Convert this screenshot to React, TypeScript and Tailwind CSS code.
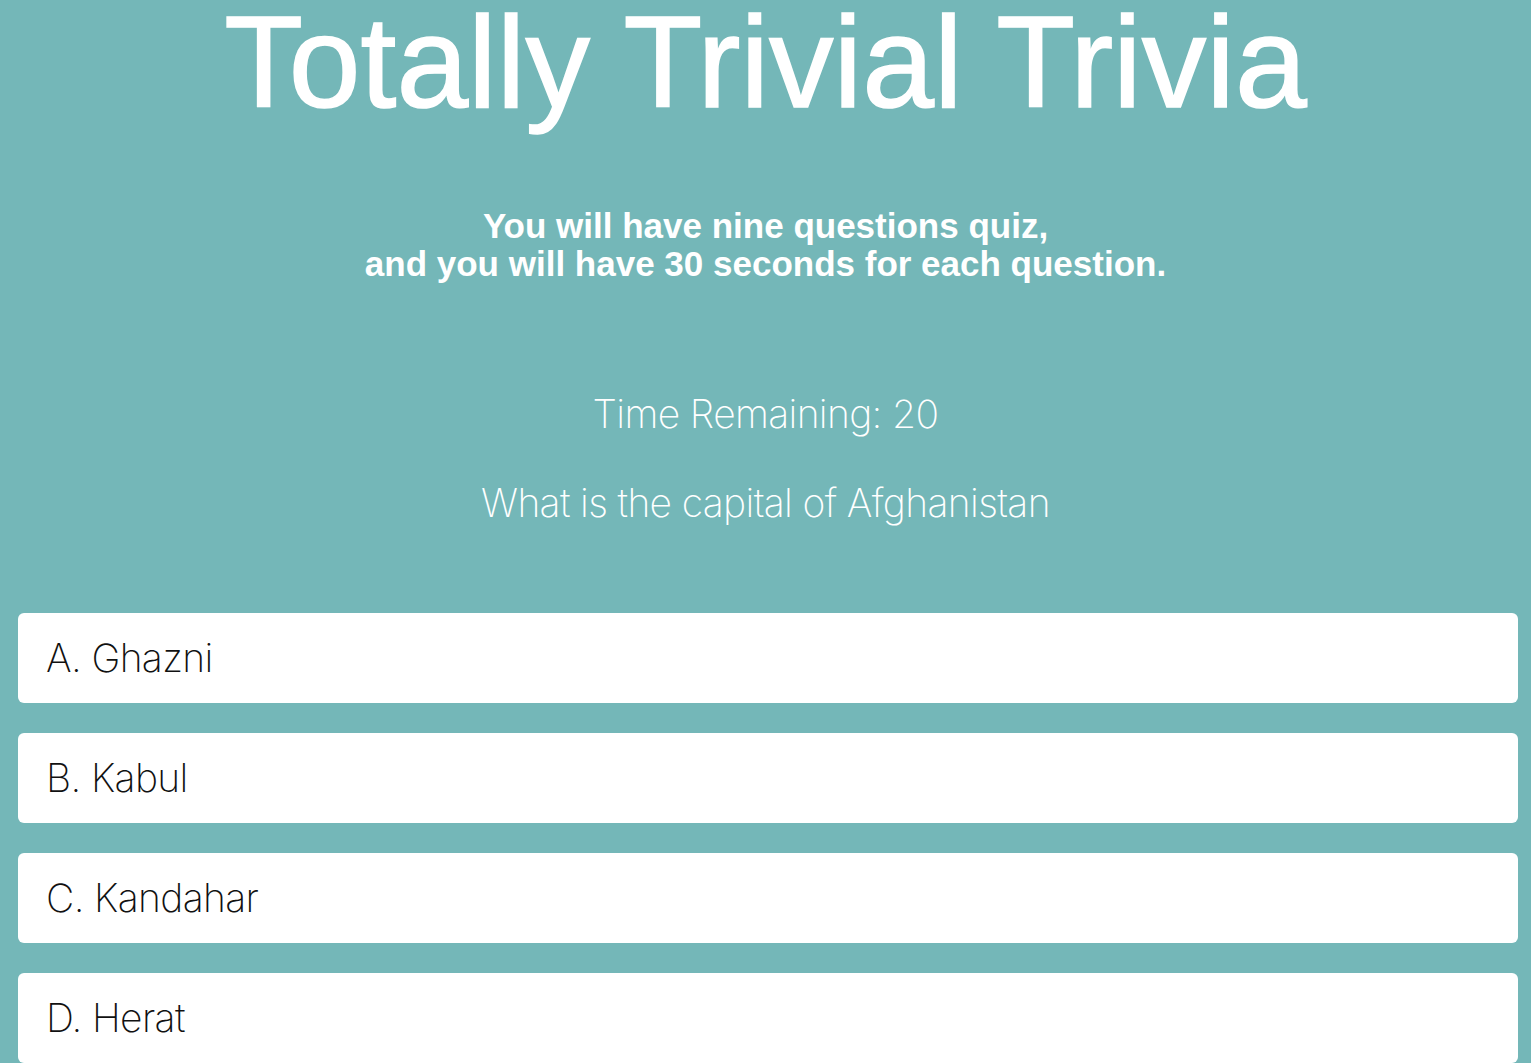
import React from 'react'

const answers = ['A. Ghazni', 'B. Kabul', 'C. Kandahar', 'D. Herat']

export default function App() {
  return (
    <div className="min-h-screen w-full bg-[#74b7b8] overflow-hidden">
      <h1 className="text-center text-white text-[129px] leading-[125px] [-webkit-text-stroke:1.5px_white] font-['Liberation_Sans',Arial,sans-serif]">
        Totally Trivial Trivia
      </h1>
      <p className="mt-[82px] text-center text-white font-bold text-[35px] leading-[38px] font-['Liberation_Sans',Arial,sans-serif]">
        You will have nine questions quiz,
        <br />
        and you will have 30 seconds for each question.
      </p>
      <div className="mt-[107px] text-center text-white font-extralight text-[39px] leading-[48px] tracking-[-0.65px] font-['Inter',sans-serif]">
        Time Remaining: 20
      </div>
      <div className="mt-[41px] text-center text-white font-extralight text-[39px] leading-[48px] tracking-[-0.65px] font-['Inter',sans-serif]">
        What is the capital of Afghanistan
      </div>
      <div className="mt-[86px] ml-[18px] w-[1500px] flex flex-col gap-[30px]">
        {answers.map((a) => (
          <div
            key={a}
            className="h-[90px] bg-white rounded-md flex items-center pl-[28px]"
          >
            <span className="text-[#111] font-extralight text-[39px] leading-[48px] tracking-[-0.65px] font-['Inter',sans-serif]">
              {a}
            </span>
          </div>
        ))}
      </div>
    </div>
  )
}
